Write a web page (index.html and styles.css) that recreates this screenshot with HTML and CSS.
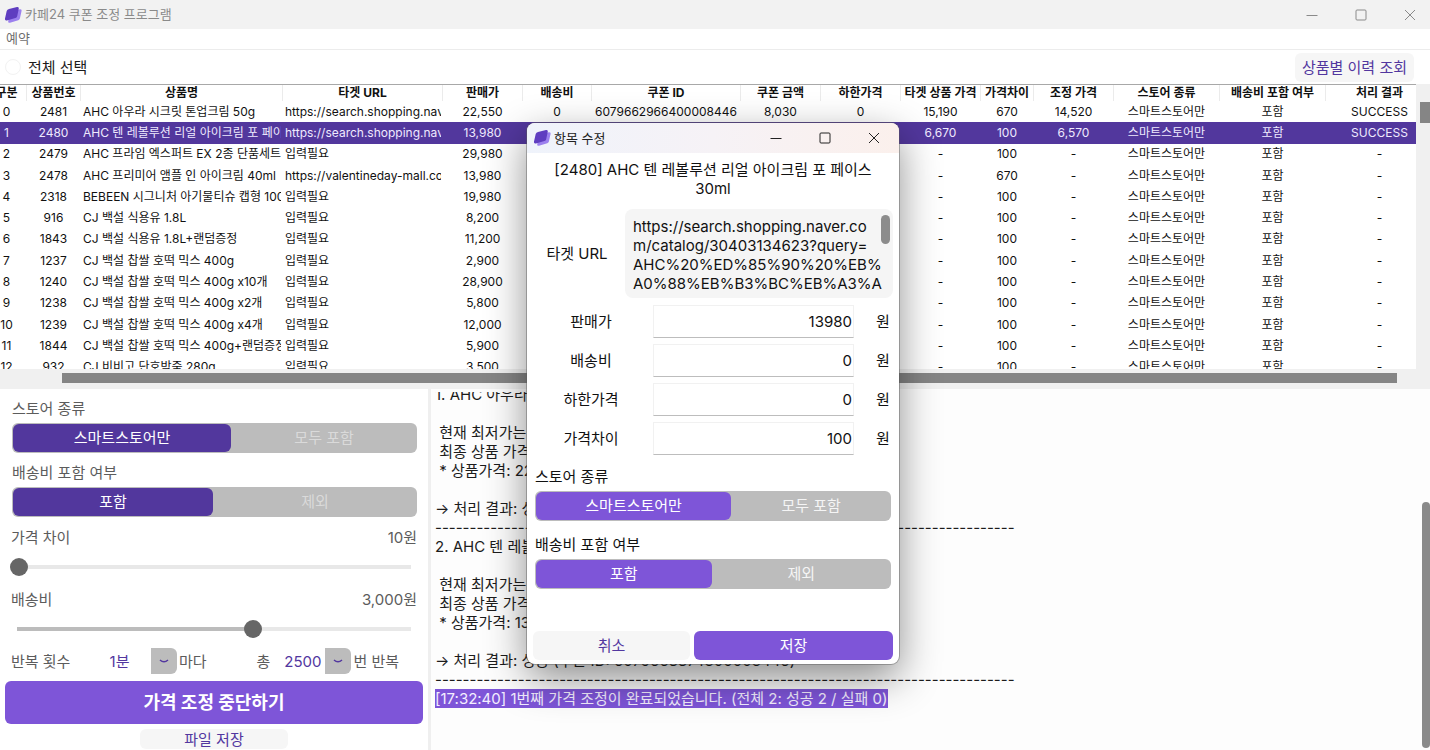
FILE: index.html
```html
<!DOCTYPE html>
<html lang="ko">
<head>
    <meta charset="UTF-8">
    <meta name="viewport" content="width=device-width, initial-scale=1.0">
    <title>카페24 쿠폰 조정 프로그램</title>
    <link rel="stylesheet" href="styles.css">
</head>
<body>
    <header class="titlebar">
        <svg class="logo" viewBox="0 0 18 18" aria-hidden="true">
            <path class="logo-back" d="M7 5.500 16 3.200Q18 3 17.600 4.800L15.900 12.600Q15.600 13.900 14.300 14.300L6 16.800Q3.800 17.200 4.200 15Z"/>
            <path class="logo-front" d="M5 3 13 1Q15.200.700 14.800 2.600L13.200 10.200Q12.800 11.700 11.400 12.100L2.900 14.400Q.500 14.800 1 12.600L2.700 5Q3.200 3.500 5 3Z"/>
        </svg>
        <span class="titlebar-text">카페24 쿠폰 조정 프로그램</span>
        <div class="window-buttons">
            <button type="button" aria-label="최소화"><svg viewBox="0 0 12 12"><path d="M.5 6.500H11.500"/></svg></button>
            <button type="button" aria-label="최대화"><svg viewBox="0 0 12 12"><rect x="1" y="1" width="10" height="10" rx="1"/></svg></button>
            <button type="button" aria-label="닫기"><svg viewBox="0 0 12 12"><path d="M1 1 11 11M11 1 1 11"/></svg></button>
        </div>
    </header>

    <nav class="menubar">
        <a href="#">예약</a>
    </nav>

    <div class="toolbar">
        <input type="checkbox" id="selectAll">
        <label for="selectAll">전체 선택</label>
        <button type="button" class="soft-button history-button">상품별 이력 조회</button>
    </div>

    <!-- 상품 목록 -->
    <section class="list">
        <div class="list-body">
            <div class="list-view">
                <table class="products">
                    <colgroup>
                        <col class="c-no"><col class="c-code"><col class="c-name"><col class="c-url"><col class="c-price"><col class="c-ship"><col class="c-coupon"><col class="c-price"><col class="c-price"><col class="c-price"><col class="c-diff"><col class="c-price"><col class="c-store"><col class="c-store"><col class="c-result">
                    </colgroup>
                    <thead>
                        <tr><th>구분</th><th>상품번호</th><th>상품명</th><th>타겟 URL</th><th>판매가</th><th>배송비</th><th>쿠폰 ID</th><th>쿠폰 금액</th><th>하한가격</th><th>타겟 상품 가격</th><th>가격차이</th><th>조정 가격</th><th>스토어 종류</th><th>배송비 포함 여부</th><th>처리 결과</th></tr>
                    </thead>
                    <tbody>
                        <tr><td>0</td><td>2481</td><td>AHC 아우라 시크릿 톤업크림 50g</td><td>https://search.shopping.naver.com</td><td>22,550</td><td>0</td><td>6079662966400008446</td><td>8,030</td><td>0</td><td>15,190</td><td>670</td><td>14,520</td><td>스마트스토어만</td><td>포함</td><td>SUCCESS</td></tr>
                        <tr class="selected"><td>1</td><td>2480</td><td>AHC 텐 레볼루션 리얼 아이크림 포 페이스 30ml</td><td>https://search.shopping.naver.com</td><td>13,980</td><td>0</td><td>6079663374800008446</td><td>7,410</td><td>0</td><td>6,670</td><td>100</td><td>6,570</td><td>스마트스토어만</td><td>포함</td><td>SUCCESS</td></tr>
                        <tr><td>2</td><td>2479</td><td>AHC 프라임 엑스퍼트 EX 2종 단품세트</td><td>입력필요</td><td>29,980</td><td>0</td><td>-</td><td>-</td><td>0</td><td>-</td><td>100</td><td>-</td><td>스마트스토어만</td><td>포함</td><td>-</td></tr>
                        <tr><td>3</td><td>2478</td><td>AHC 프리미어 앰플 인 아이크림 40ml</td><td>https://valentineday-mall.com</td><td>13,980</td><td>0</td><td>-</td><td>-</td><td>0</td><td>-</td><td>670</td><td>-</td><td>스마트스토어만</td><td>포함</td><td>-</td></tr>
                        <tr><td>4</td><td>2318</td><td>BEBEEN 시그니처 아기물티슈 캡형 100매</td><td>입력필요</td><td>19,980</td><td>0</td><td>-</td><td>-</td><td>0</td><td>-</td><td>100</td><td>-</td><td>스마트스토어만</td><td>포함</td><td>-</td></tr>
                        <tr><td>5</td><td>916</td><td>CJ 백설 식용유 1.8L</td><td>입력필요</td><td>8,200</td><td>0</td><td>-</td><td>-</td><td>0</td><td>-</td><td>100</td><td>-</td><td>스마트스토어만</td><td>포함</td><td>-</td></tr>
                        <tr><td>6</td><td>1843</td><td>CJ 백설 식용유 1.8L+랜덤증정</td><td>입력필요</td><td>11,200</td><td>0</td><td>-</td><td>-</td><td>0</td><td>-</td><td>100</td><td>-</td><td>스마트스토어만</td><td>포함</td><td>-</td></tr>
                        <tr><td>7</td><td>1237</td><td>CJ 백설 찹쌀 호떡 믹스 400g</td><td>입력필요</td><td>2,900</td><td>0</td><td>-</td><td>-</td><td>0</td><td>-</td><td>100</td><td>-</td><td>스마트스토어만</td><td>포함</td><td>-</td></tr>
                        <tr><td>8</td><td>1240</td><td>CJ 백설 찹쌀 호떡 믹스 400g x10개</td><td>입력필요</td><td>28,900</td><td>0</td><td>-</td><td>-</td><td>0</td><td>-</td><td>100</td><td>-</td><td>스마트스토어만</td><td>포함</td><td>-</td></tr>
                        <tr><td>9</td><td>1238</td><td>CJ 백설 찹쌀 호떡 믹스 400g x2개</td><td>입력필요</td><td>5,800</td><td>0</td><td>-</td><td>-</td><td>0</td><td>-</td><td>100</td><td>-</td><td>스마트스토어만</td><td>포함</td><td>-</td></tr>
                        <tr><td>10</td><td>1239</td><td>CJ 백설 찹쌀 호떡 믹스 400g x4개</td><td>입력필요</td><td>12,000</td><td>0</td><td>-</td><td>-</td><td>0</td><td>-</td><td>100</td><td>-</td><td>스마트스토어만</td><td>포함</td><td>-</td></tr>
                        <tr><td>11</td><td>1844</td><td>CJ 백설 찹쌀 호떡 믹스 400g+랜덤증정</td><td>입력필요</td><td>5,900</td><td>0</td><td>-</td><td>-</td><td>0</td><td>-</td><td>100</td><td>-</td><td>스마트스토어만</td><td>포함</td><td>-</td></tr>
                        <tr><td>12</td><td>932</td><td>CJ 비비고 단호박죽 280g</td><td>입력필요</td><td>3,500</td><td>0</td><td>-</td><td>-</td><td>0</td><td>-</td><td>100</td><td>-</td><td>스마트스토어만</td><td>포함</td><td>-</td></tr>
                    </tbody>
                </table>
            </div>
            <div class="scroll-v"><div class="scroll-v-thumb"></div></div>
        </div>
        <div class="scroll-h"><div class="scroll-h-thumb"></div></div>
    </section>

    <main class="bottom">
        <!-- 설정 패널 -->
        <form class="settings">
            <fieldset class="choice">
                <legend>스토어 종류</legend>
                <div class="segments segments-store">
                    <label><input type="radio" name="store" checked><span>스마트스토어만</span></label>
                    <label><input type="radio" name="store"><span>모두 포함</span></label>
                </div>
            </fieldset>
            <fieldset class="choice">
                <legend>배송비 포함 여부</legend>
                <div class="segments">
                    <label><input type="radio" name="ship" checked><span>포함</span></label>
                    <label><input type="radio" name="ship"><span>제외</span></label>
                </div>
            </fieldset>

            <div class="slider">
                <label for="gap">가격 차이</label>
                <output for="gap">10원</output>
                <input type="range" id="gap" min="10" max="5000" value="10" style="--fill: 0%">
            </div>
            <div class="slider">
                <label for="shipping">배송비</label>
                <output for="shipping">3,000원</output>
                <input type="range" id="shipping" min="0" max="5000" value="3000" style="--fill: 60%">
            </div>

            <div class="repeat">
                <span class="repeat-title">반복 횟수</span>
                <span class="combo combo-wide">
                    <select id="interval" aria-label="반복 간격"><option>1분</option></select>
                    <svg viewBox="0 0 26 26" aria-hidden="true"><path d="M9 12Q13 15.500 17 12"/></svg>
                </span>
                <label for="interval">마다</label>
                <span class="repeat-total">총</span>
                <span class="combo">
                    <select id="count" aria-label="반복 횟수"><option>2500</option></select>
                    <svg viewBox="0 0 26 26" aria-hidden="true"><path d="M9 12Q13 15.500 17 12"/></svg>
                </span>
                <label for="count">번 반복</label>
            </div>

            <button type="button" class="stop-button">가격 조정 중단하기</button>
            <button type="button" class="soft-button file-button">파일 저장</button>
        </form>

        <!-- 처리 로그 -->
        <section class="log">
            <div class="log-text">1. AHC 아우라 시크릿 톤업크림 50g

 현재 최저가는 15,190원 입니다.
 최종 상품 가격: 14,520원
 * 상품가격: 22,550원

→ 처리 결과: 성공 (쿠폰 ID: 6079662966400008446)
------------------------------------------------------------------------------------
2. AHC 텐 레볼루션 리얼 아이크림 포 페이스 30ml

 현재 최저가는 6,670원 입니다.
 최종 상품 가격: 6,570원
 * 상품가격: 13,980원

→ 처리 결과: 성공 (쿠폰 ID: 6079663374800008446)
------------------------------------------------------------------------------------
<mark>[17:32:40] 1번째 가격 조정이 완료되었습니다. (전체 2: 성공 2 / 실패 0)</mark></div>
            <div class="log-scroll"></div>
        </section>
    </main>

    <!-- 항목 수정 창 -->
    <form class="dialog" role="dialog" aria-labelledby="dialogTitle">
        <div class="titlebar dialog-titlebar">
            <svg class="logo" viewBox="0 0 18 18" aria-hidden="true">
                <path class="logo-back" d="M7 5.500 16 3.200Q18 3 17.600 4.800L15.900 12.600Q15.600 13.900 14.300 14.300L6 16.800Q3.800 17.200 4.200 15Z"/>
                <path class="logo-front" d="M5 3 13 1Q15.200.700 14.800 2.600L13.200 10.200Q12.800 11.700 11.400 12.100L2.900 14.400Q.500 14.800 1 12.600L2.700 5Q3.200 3.500 5 3Z"/>
            </svg>
            <span class="titlebar-text" id="dialogTitle">항목 수정</span>
            <div class="window-buttons">
                <button type="button" aria-label="최소화"><svg viewBox="0 0 12 12"><path d="M.5 6.500H11.500"/></svg></button>
                <button type="button" aria-label="최대화"><svg viewBox="0 0 12 12"><rect x="1" y="1" width="10" height="10" rx="1"/></svg></button>
                <button type="button" aria-label="닫기"><svg viewBox="0 0 12 12"><path d="M1 1 11 11M11 1 1 11"/></svg></button>
            </div>
        </div>
        <div class="dialog-body">
            <h2>[2480] AHC 텐 레볼루션 리얼 아이크림 포 페이스 30ml</h2>

            <div class="url-row">
                <label for="url">타겟 URL</label>
                <div class="url-box">
                    <textarea id="url" rows="4">https://search.shopping.naver.co
m/catalog/30403134623?query=
AHC%20%ED%85%90%20%EB%
A0%88%EB%B3%BC%EB%A3%A</textarea>
                    <div class="url-scroll"></div>
                </div>
            </div>

            <div class="fields">
                <label for="price">판매가</label><input type="text" id="price" value="13980"><span>원</span>
                <label for="shipFee">배송비</label><input type="text" id="shipFee" value="0"><span>원</span>
                <label for="floor">하한가격</label><input type="text" id="floor" value="0"><span>원</span>
                <label for="diff">가격차이</label><input type="text" id="diff" value="100"><span>원</span>
            </div>

            <fieldset class="choice">
                <legend>스토어 종류</legend>
                <div class="segments segments-store">
                    <label><input type="radio" name="itemStore" checked><span>스마트스토어만</span></label>
                    <label><input type="radio" name="itemStore"><span>모두 포함</span></label>
                </div>
            </fieldset>
            <fieldset class="choice">
                <legend>배송비 포함 여부</legend>
                <div class="segments">
                    <label><input type="radio" name="itemShip" checked><span>포함</span></label>
                    <label><input type="radio" name="itemShip"><span>제외</span></label>
                </div>
            </fieldset>

            <div class="dialog-buttons">
                <button type="button" class="soft-button">취소</button>
                <button type="submit" class="save-button">저장</button>
            </div>
        </div>
    </form>
</body>
</html>
```
FILE: styles.css
```css
* {
    box-sizing: border-box;
}

body {
    margin: 0;
    height: 100vh;
    display: flex;
    flex-direction: column;
    position: relative;
    overflow: hidden;
    background: #fff;
    color: #1c1c1c;
    font-family: Inter, "Noto Sans CJK KR", sans-serif;
    font-size: 15px;
    line-height: 19px;
}

button, input, select, textarea {
    font: inherit;
    color: inherit;
}

button {
    border: none;
    padding: 0;
    cursor: pointer;
}

/* 제목 표시줄 */
.titlebar {
    display: flex;
    align-items: center;
    height: 29px;
    flex: none;
    padding-left: 4px;
    background: #f2f2f2;
    color: #8a8a8a;
    font-size: 13px;
}

.logo {
    width: 18px;
    height: 18px;
    margin-right: 3px;
}

.logo-back {
    fill: #9c80ee;
}

.logo-front {
    fill: #5f3dc0;
}

.window-buttons {
    display: flex;
    gap: 9px;
    margin-left: auto;
}

.window-buttons button {
    width: 40px;
    height: 28px;
    display: flex;
    align-items: center;
    justify-content: center;
    background: none;
}

.window-buttons svg {
    width: 12px;
    height: 12px;
    fill: none;
    stroke: currentColor;
}

.menubar {
    height: 21px;
    flex: none;
    padding-left: 6px;
    border-bottom: 1px solid #ececec;
    font-size: 13px;
}

.menubar a {
    color: #6e6e6e;
    text-decoration: none;
}

/* 도구 모음 */
.toolbar {
    display: flex;
    align-items: center;
    height: 34px;
    flex: none;
    padding: 0 16px 0 5px;
}

.toolbar input {
    appearance: none;
    width: 16px;
    height: 16px;
    margin: 0 7px 0 0;
    border: 1px solid #f2f2f2;
    border-radius: 50%;
}

.soft-button {
    background: #f6f6f6;
    color: #52379f;
    border-radius: 6px;
}

.history-button {
    height: 29px;
    margin-left: auto;
    padding: 0 7px;
}

/* 상품 목록 */
.list {
    flex: none;
    background: #f0f0f0;
}

.list-body {
    display: flex;
    height: 285px;
}

.list-view {
    flex: 1;
    overflow: hidden;
    background: #fff;
    border-top: 1px solid #a8a8a8;
}

.products {
    width: calc(100% + 31px);
    height: 293px;
    margin-left: -13px;
    table-layout: fixed;
    border-spacing: 0;
    color: #111;
    font-size: 12px;
    line-height: 16px;
}

.c-no { width: 40px; }
.c-code { width: 54px; }
.c-name { width: 202px; }
.c-url { width: 160px; }
.c-price { width: 80px; }
.c-ship { width: 69px; }
.c-coupon { width: 149px; }
.c-diff { width: 53px; }
.c-store { width: 106px; }
.c-result { width: 108px; }

.products th,
.products td {
    padding: 0;
    overflow: hidden;
    white-space: nowrap;
    text-align: center;
    border-right: 1px solid transparent;
}

.products th {
    height: 16px;
    border-color: #ebebeb;
}

.products td:nth-child(3),
.products td:nth-child(4) {
    padding-left: 2px;
    border-right-width: 2px;
    text-align: left;
}

.products .selected td {
    background: #52379d;
    color: #efeaff;
}

.scroll-v {
    width: 14px;
    padding: 18px 0 0 4px;
}

.scroll-v-thumb {
    height: 21px;
    background: #858585;
}

.scroll-h {
    height: 20px;
    padding: 4px 33px 6px 62px;
}

.scroll-h-thumb {
    height: 10px;
    background: #858585;
}

.bottom {
    flex: 1;
    display: flex;
    min-height: 0;
}

/* 설정 패널 */
.settings {
    width: 431px;
    flex: none;
    padding: 10px 5px 0;
    border-right: 3px solid #efefef;
    color: #5c5c5c;
}

.choice {
    margin: 0;
    padding: 0;
    border: none;
}

.settings .choice {
    margin: 0 6px 10px 7px;
}

.choice legend {
    padding: 0;
    margin-bottom: 5px;
}

.segments {
    display: grid;
    grid-template-columns: 99fr 101fr;
    height: 30px;
    padding: 1px 0 1px 1px;
    border-radius: 6px;
    background: #bcbcbc;
}

.segments-store {
    grid-template-columns: 55% 45%;
}

.settings .segments-store {
    grid-template-columns: 54% 46%;
}

.segments label {
    display: flex;
    position: relative;
    cursor: pointer;
}

.segments input {
    position: absolute;
    opacity: 0;
    pointer-events: none;
}

.segments span {
    flex: 1;
    border-radius: 6px;
    line-height: 27px;
    text-align: center;
    color: #f5f5f5;
}

.settings .segments span {
    color: #dadada;
}

.segments input:checked + span {
    background: #7e55d8;
    color: #fff;
}

.settings .segments input:checked + span {
    background: #52379d;
}

.slider {
    display: grid;
    grid-template-columns: 1fr auto;
    row-gap: 11px;
    margin: 11px 6px 14px;
}

.slider + .slider {
    margin-bottom: 10px;
}

.slider input {
    grid-column: 1 / -1;
    appearance: none;
    height: 18px;
    width: calc(100% + 2px);
    margin: 0 -1px;
    border-radius: 9px;
    background: linear-gradient(to right, #bcbcbc var(--fill), #e8e8e8 var(--fill)) 7px 7px / calc(100% - 14px) 4px no-repeat;
}

.slider input::-webkit-slider-thumb {
    appearance: none;
    width: 18px;
    height: 18px;
    border-radius: 50%;
    background: #666;
}

.repeat {
    display: flex;
    align-items: center;
    margin: 0 6px 7px;
}

.repeat-title {
    width: 77px;
}

.combo {
    display: flex;
    width: 71px;
    height: 26px;
    margin-right: 2px;
}

.combo-wide {
    width: 89px;
}

.combo select {
    appearance: none;
    flex: 1;
    min-width: 0;
    border: none;
    padding: 0;
    background: none;
    color: #52379f;
    text-align: center;
    text-align-last: center;
}

.combo svg {
    width: 26px;
    flex: none;
    background: #bcbcbc;
    border-radius: 0 6px 6px 0;
    fill: none;
    stroke: #52379f;
    stroke-width: 1.5;
}

.repeat-total {
    margin: 0 10px 0 auto;
}

.repeat label:last-child {
    margin-right: 18px;
}

.stop-button,
.save-button {
    background: #7e55d8;
    color: #fff;
    border-radius: 6px;
}

.stop-button {
    width: 100%;
    height: 43px;
    font-size: 18px;
    font-weight: bold;
}

.file-button {
    display: block;
    width: 148px;
    height: 20px;
    margin: 5px auto 0;
}

/* 처리 로그 */
.log {
    flex: 1;
    display: flex;
    padding-top: 3px;
    background: #fdfdfd;
}

.log-text {
    flex: 1;
    display: flow-root;
    padding-left: 4px;
    overflow: hidden;
    white-space: pre;
}

/* 스크롤된 첫 줄 */
.log-text::before {
    content: "";
    display: block;
    margin-top: -7px;
}

.log-text mark {
    display: inline-block;
    background: #7e55d8;
    color: #f3eeff;
}

.log-scroll {
    width: 8px;
    margin: 110px 0 2px;
    border-radius: 4px;
    background: #8a8a8a;
}

/* 항목 수정 창 */
.dialog {
    position: absolute;
    top: 123px;
    left: 527px;
    width: 372px;
    border-radius: 8px;
    background: #fff;
    color: #111;
    box-shadow: 0 0 0 1px rgba(90, 90, 90, 0.45), 0 14px 40px rgba(0, 0, 0, 0.45);
    overflow: hidden;
}

.dialog-titlebar {
    height: 30px;
    padding: 0 5px 0 6px;
    background: linear-gradient(to right, #eff3fb, #f6f2f6 50%, #fbf0ec);
    color: #222;
}

.dialog-body {
    padding: 7px 6px 4px;
}

.dialog h2 {
    margin: 0 18px 11px;
    font-size: 15px;
    font-weight: normal;
    text-align: center;
}

.url-row {
    display: grid;
    grid-template-columns: 88px 1fr;
    gap: 4px;
    align-items: center;
    text-align: center;
}

.url-box {
    position: relative;
    display: flex;
    padding: 8px 8px 5px;
    border-radius: 8px;
    background: #f5f5f5;
}

.url-box textarea {
    flex: 1;
    min-width: 0;
    height: 76px;
    padding: 0;
    border: none;
    background: none;
    resize: none;
    overflow: hidden;
    word-break: break-all;
}

.url-scroll {
    position: absolute;
    top: 6px;
    right: 3px;
    width: 9px;
    height: 29px;
    border-radius: 5px;
    background: #8c8c8c;
}

.fields {
    display: grid;
    grid-template-columns: 116px 1fr 20px;
    gap: 6px 4px;
    align-items: center;
    margin: 7px 0 12px;
    text-align: center;
}

.fields input {
    width: calc(100% - 15px);
    height: 33px;
    padding: 0 1px;
    border: 1px solid #f1f1f1;
    border-bottom-color: #bdbdbd;
    background: #fff;
    text-align: right;
}

.dialog .choice {
    margin: 0 2px 14px;
}

.dialog-buttons {
    display: grid;
    grid-template-columns: 157px 1fr;
    gap: 4px;
    margin-top: 42px;
}

.dialog-buttons button {
    height: 29px;
}
```
